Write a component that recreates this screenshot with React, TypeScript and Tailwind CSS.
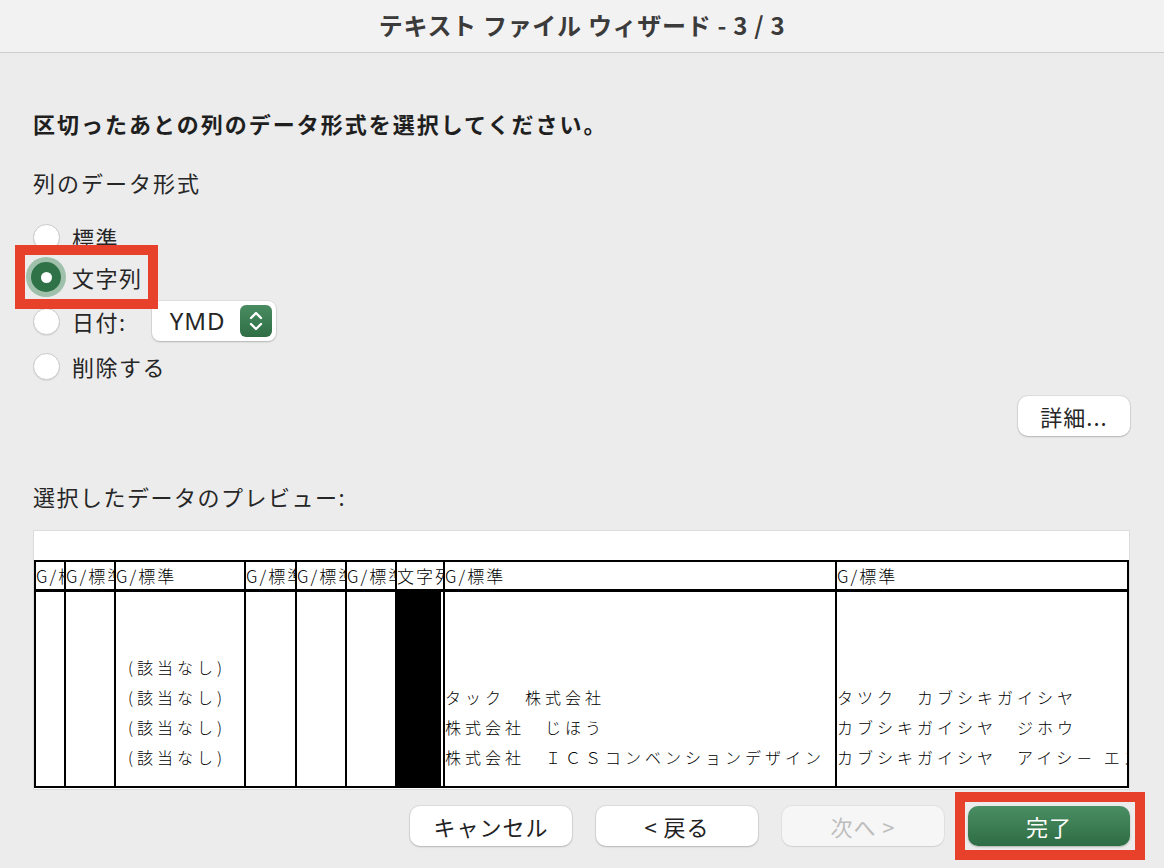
import React from "react";

const FONT = { fontFamily: '"Noto Sans CJK JP", "Noto Sans", sans-serif' };

type Col = { w: string; head: string; lines: string[]; dark?: boolean };

const COLS: Col[] = [
  { w: "w-[28px]", head: "G/標準", lines: [] },
  { w: "w-[50px]", head: "G/標準", lines: [] },
  { w: "w-[130px]", head: "G/標準", lines: ["", "", "(該当なし)", "(該当なし)", "(該当なし)", "(該当なし)"] },
  { w: "w-[51px]", head: "G/標準", lines: [] },
  { w: "w-[50px]", head: "G/標準", lines: [] },
  { w: "w-[50px]", head: "G/標準", lines: [] },
  { w: "w-[48px]", head: "文字列", lines: [], dark: true },
  {
    w: "w-[392px]",
    head: "G/標準",
    lines: ["", "", "", "タック　株式会社", "株式会社　じほう", "株式会社　ＩＣＳコンベンションデザイン"],
  },
  {
    w: "flex-1",
    head: "G/標準",
    lines: ["", "", "", "タツク　カブシキガイシヤ", "カブシキガイシヤ　ジホウ", "カブシキガイシヤ　アイシ－ エス"],
  },
];

function Radio({ checked }: { checked?: boolean }) {
  if (checked) {
    return (
      <span className="flex h-[40px] w-[40px] items-center justify-center rounded-full bg-[#7fae8e]/70">
        <span className="flex h-[30px] w-[30px] items-center justify-center rounded-full bg-[#2f7247]">
          <span className="h-[11px] w-[11px] rounded-full bg-white" />
        </span>
      </span>
    );
  }
  return (
    <span className="flex h-[40px] w-[40px] items-center justify-center">
      <span className="h-[27px] w-[27px] rounded-full border border-[#c9c9c9] bg-white shadow-[0_1px_1px_rgba(0,0,0,0.08)]" />
    </span>
  );
}

function Btn({ label, kind }: { label: string; kind?: "primary" | "disabled" }) {
  const cls =
    kind === "primary"
      ? "bg-gradient-to-b from-[#4b8e63] to-[#2e6d44] text-white shadow-[0_1px_2px_rgba(0,0,0,0.25)]"
      : kind === "disabled"
      ? "bg-[#f6f6f6] text-[#bdbdbd] shadow-[0_0_0_1px_rgba(0,0,0,0.04),0_1px_1px_rgba(0,0,0,0.08)]"
      : "bg-white text-[#222] shadow-[0_0_0_1px_rgba(0,0,0,0.06),0_1px_2px_rgba(0,0,0,0.18)]";
  return (
    <div className={`flex h-[40px] w-[162px] items-center justify-center rounded-[10px] text-[22px] tracking-[1px] ${cls}`}>
      {label}
    </div>
  );
}

export default function App() {
  return (
    <div className="h-[868px] w-[1164px] overflow-hidden bg-[#ececec] text-[#262626]" style={FONT}>
      <div className="flex h-[53px] justify-center border-b border-[#cdcdcd] bg-[#f3f2f2] pt-[7px]">
        <span className="text-[24px] font-bold tracking-[0.7px] text-[#3b3b3b]">テキスト ファイル ウィザード - 3 / 3</span>
      </div>

      <div className="pl-[33px] pr-[34px]">
        <div className="mt-[54px] text-[22px] font-bold leading-[32px] tracking-[2px] text-[#1f1f1f]">
          区切ったあとの列のデータ形式を選択してください。
        </div>
        <div className="mt-[27px] text-[22px] leading-[32px] tracking-[2px]">列のデータ形式</div>

        <div className="mt-[19px] -ml-[7px] flex flex-col">
          <div className="flex h-[40px] items-center gap-[6px]">
            <Radio />
            <span className="text-[22px] tracking-[1.5px]">標準</span>
          </div>
          <div className="relative flex h-[40px] items-center gap-[6px]">
            <Radio checked />
            <span className="text-[22px] tracking-[1.5px]">文字列</span>
            <div className="absolute left-[-11px] top-[-12px] h-[64px] w-[143px] border-[10px] border-[#e8412b]" />
          </div>
          <div className="mt-[2px] flex h-[44px] items-center gap-[6px]">
            <Radio />
            <span className="text-[22px] tracking-[1.5px]">日付:</span>
            <div className="ml-[19px] flex h-[40px] w-[124px] items-center justify-between rounded-[8px] bg-white pl-[18px] pr-[4px] shadow-[0_0_0_1px_rgba(0,0,0,0.05),0_1px_2px_rgba(0,0,0,0.2)]">
              <span className="text-[24px] tracking-[1px]" style={{ fontFamily: '"Noto Sans", sans-serif' }}>
                YMD
              </span>
              <span className="flex h-[32px] w-[32px] items-center justify-center rounded-[6px] bg-gradient-to-b from-[#4a8c61] to-[#2f6e45]">
                <svg width="16" height="24" viewBox="0 0 16 24" fill="none" stroke="white" strokeWidth="2.4" strokeLinecap="round" strokeLinejoin="round">
                  <path d="M3 9 L8 4 L13 9" />
                  <path d="M3 15 L8 20 L13 15" />
                </svg>
              </span>
            </div>
          </div>
          <div className="mt-[3px] flex h-[40px] items-center gap-[6px]">
            <Radio />
            <span className="text-[22px] tracking-[1.5px]">削除する</span>
          </div>
        </div>

        <div className="mt-[10px] flex justify-end">
          <div className="flex h-[40px] w-[112px] items-center justify-center rounded-[10px] bg-white text-[22px] tracking-[1px] shadow-[0_0_0_1px_rgba(0,0,0,0.06),0_1px_2px_rgba(0,0,0,0.18)]">
            詳細...
          </div>
        </div>

        <div className="mt-[44px] text-[22px] leading-[32px] tracking-[1.5px]">選択したデータのプレビュー:</div>

        <div className="mt-[18px] h-[260px] w-[1097px] overflow-hidden border border-[#dcdcdc] bg-white">
          <div className="h-[29px]" />
          <div className="flex h-[228px] border-2 border-black" style={{ fontFamily: '"Noto Sans CJK JP", sans-serif' }}>
            {COLS.map((c, i) => (
              <div key={i} className={`flex shrink-0 flex-col overflow-hidden ${c.w} ${i > 0 ? "border-l-2 border-black" : ""}`}>
                <div className="h-[30px] shrink-0 overflow-hidden whitespace-nowrap border-b-[3px] border-black text-[17px] font-light leading-[28px] tracking-[2px] text-black">
                  {c.head}
                </div>
                <div className={`flex-1 overflow-hidden ${c.dark ? "border-r-2 border-white bg-black" : ""}`}>
                  {c.lines.map((l, j) => (
                    <div
                      key={j}
                      className={`h-[30px] whitespace-nowrap text-[16px] font-light leading-[30px] tracking-[4px] text-black ${
                        i === 2 ? "pl-[12px]" : ""
                      }`}
                    >
                      {l}
                    </div>
                  ))}
                </div>
              </div>
            ))}
          </div>
        </div>

        <div className="mt-[16px] flex justify-end gap-[24px]">
          <Btn label="キャンセル" />
          <Btn label="< 戻る" />
          <Btn label="次へ >" kind="disabled" />
          <div className="relative">
            <Btn label="完了" kind="primary" />
            <div className="absolute left-[-13px] top-[-14px] h-[68px] w-[190px] border-[10px] border-[#e8412b]" />
          </div>
        </div>
      </div>
    </div>
  );
}
